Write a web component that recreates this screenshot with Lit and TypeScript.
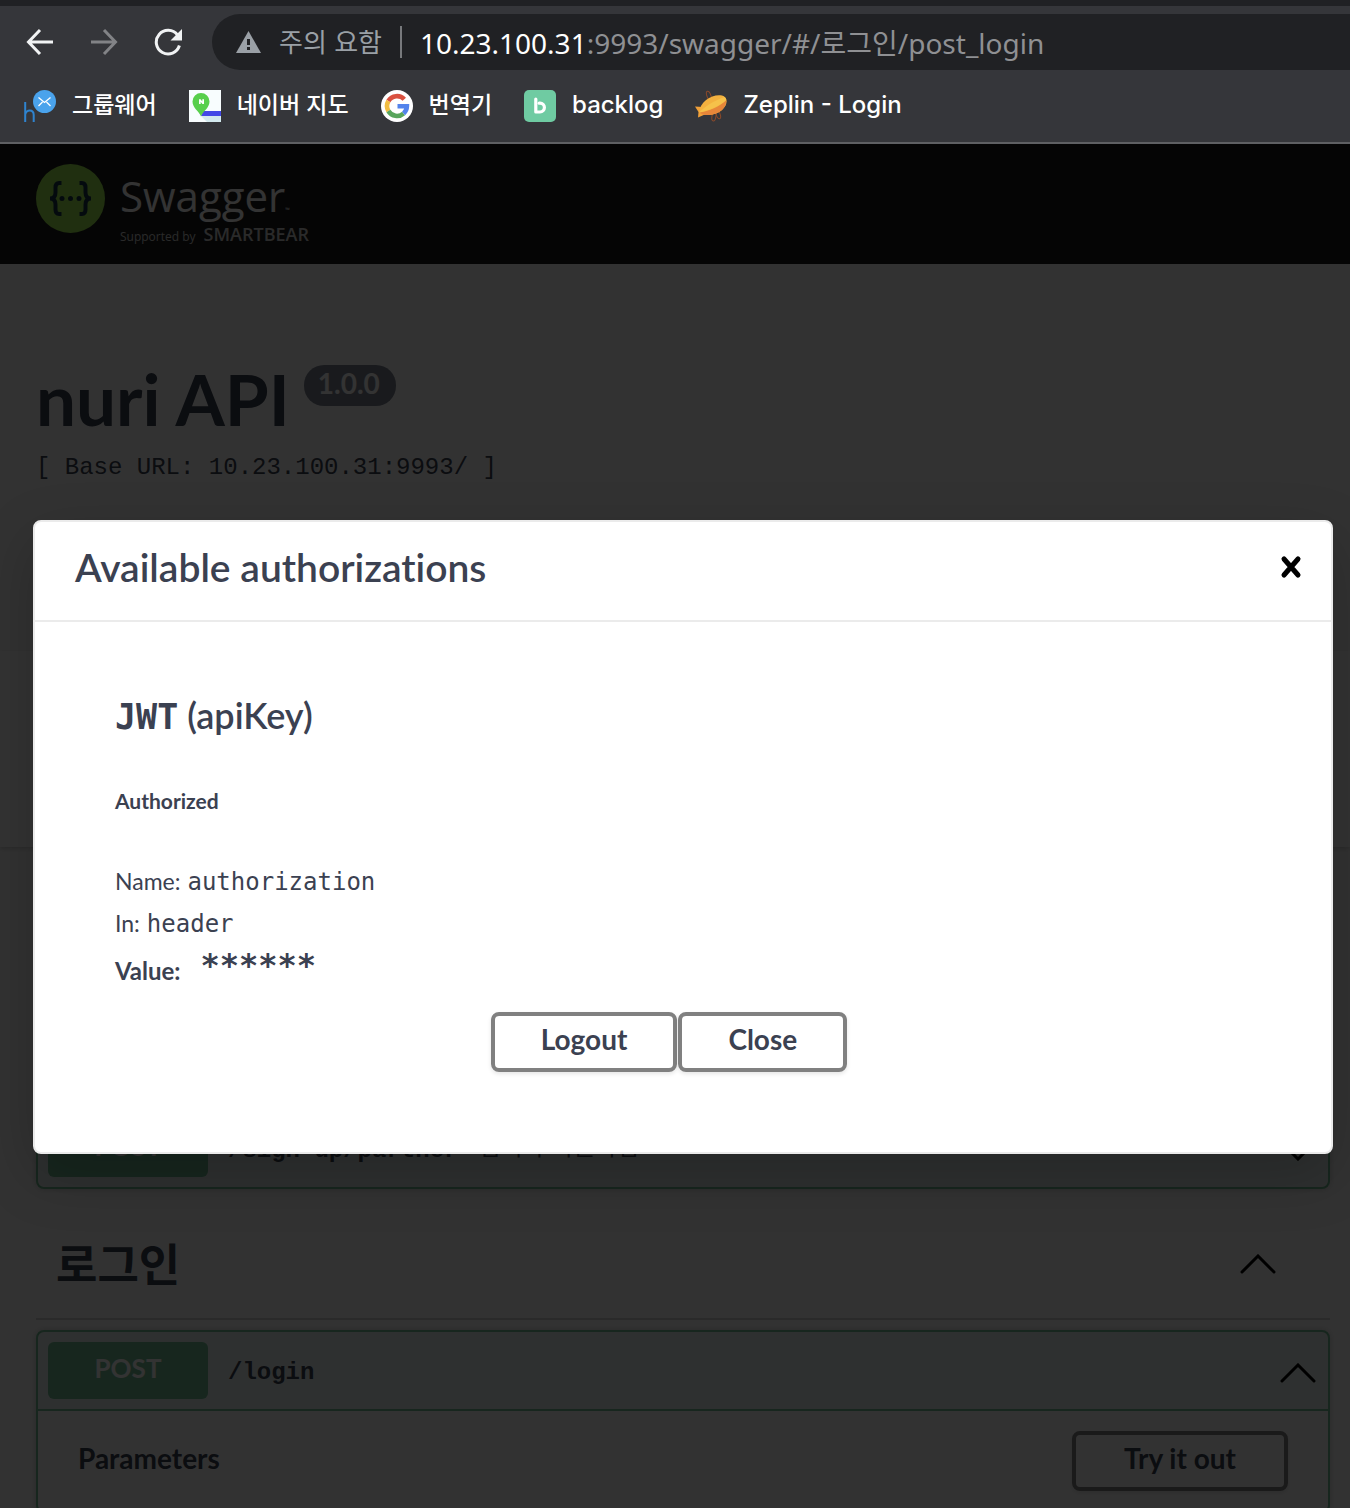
import { LitElement, html, css, svg, nothing, type TemplateResult } from "lit";
import { customElement, property } from "lit/decorators.js";

const chevron = (up: boolean) => html`
  <svg class="chevron" viewBox="0 0 36 20" aria-hidden="true">
    <path d=${up ? "M2 18 18 2 34 18" : "M2 2 18 18 34 2"} />
  </svg>`;

/* ---------- Browser toolbar and bookmarks ---------- */

const groupwareIcon = svg`
  <circle cx="20.500" cy="11.500" r="11.500" fill="#4aa3ec"/>
  <path d="M14.500 7.500 20.500 12.500 26.500 7.500M14.500 16 18.500 12M26.500 16 22.500 12" fill="none" stroke="#fff" stroke-width="1.300"/>
  <path d="M1.200 12v20M1.200 24.500c.8-3 2.800-4 4.600-4 2.600 0 3.900 1.600 3.900 4.500v7" fill="none" stroke="#2f84cf" stroke-width="2"/>`;

const mapIcon = svg`
  <path d="M0 0h32v32H0z" fill="#f8fdfe"/>
  <path d="M12 26h20v6H18z" fill="#d3e9ee"/>
  <path d="M14 21h18v5H12z" fill="#4348e6"/>
  <path d="M12 26.500C10 21 3.500 18 3.500 11.500a8.500 8.500 0 0 1 17 0C20.500 18 14 21 12 26.500z" fill="#58cf4c"/>
  <path d="M10 14V9.200h1.600l1.700 2.300V9.200h1.700V14h-1.600l-1.700-2.300V14z" fill="#fff"/>`;

const googleIcon = svg`
  <circle cx="16" cy="16" r="16" fill="#fff"/>
  <g fill="none" stroke-width="4.600">
    <path d="M23.300 9.300A10 10 0 0 0 7.400 11" stroke="#d9503f"/>
    <path d="M7.400 11a10 10 0 0 0 0 10" stroke="#f2bd42"/>
    <path d="M7.400 21a10 10 0 0 0 15.200 2.500" stroke="#58a55c"/>
    <path d="M22.600 23.500A10 10 0 0 0 25.900 16.300H16.500" stroke="#5383ec"/>
  </g>`;

const backlogIcon = svg`
  <rect width="32" height="32" rx="5" fill="#6fcba2"/>
  <path d="M11.800 9v13h4.200a4.400 4.400 0 0 0 0-8.800h-.8" fill="none" stroke="#fff" stroke-width="3.200" stroke-linejoin="round" stroke-linecap="round"/>`;

const zeplinIcon = svg`
  <g fill="none" stroke="#8c4a2a" stroke-width="1">
    <ellipse cx="14" cy="6" rx="2" ry="5" transform="rotate(-20 14 6)"/>
    <ellipse cx="23" cy="24" rx="2" ry="5" transform="rotate(-20 23 24)"/>
    <ellipse cx="19" cy="26" rx="2" ry="5" transform="rotate(10 19 26)"/>
  </g>
  <path d="M0 16.500 8 17 11 24 3 27.500 3.500 22z" fill="#f0a03a"/>
  <path d="M4 22.500C5 11 18 3.500 27 5.500c6 1.500 6 9 0 14.500C20 26 9 26.500 4 22.500z" fill="#f3b13f"/>
  <path d="M4 22.500C14 21.500 25 16.500 31.300 10c.2 3.500-1.300 7-4.300 10C20 26 9 26.500 4 22.500z" fill="#e7863a"/>
  <path d="M4 22.500C9 17 20 10 29.800 7c.8.800 1.300 1.800 1.500 3C25 16 13 21 4 22.500z" fill="#f6c14a"/>`;

const bookmarks: { label: string; icon: TemplateResult<2>; ko?: boolean }[] = [
  { label: "그룹웨어", icon: groupwareIcon, ko: true },
  { label: "네이버 지도", icon: mapIcon, ko: true },
  { label: "번역기", icon: googleIcon, ko: true },
  { label: "backlog", icon: backlogIcon },
  { label: "Zeplin - Login", icon: zeplinIcon },
];

@customElement("browser-bar")
export class BrowserBar extends LitElement {
  static styles = css`
    :host {
      display: block;
      background: #35363a;
      border-top: 6px solid #202124;
      border-bottom: 2px solid #5f6063;
      font-family: Inter, "Noto Sans CJK KR", sans-serif;
      color: #fff;
    }
    .nav { display: flex; align-items: center; padding: 8px 0 0 26px; }
    .tool { display: block; width: 28px; height: 28px; margin-right: 36px; padding: 0; border: 0; background: none; color: #f1f3f4; }
    .tool.off { color: #828386; }
    .tool.reload { margin-right: 30px; }
    .tool svg { display: block; width: 28px; height: 28px; fill: none; stroke: currentColor; stroke-width: 3; }
    .omnibox {
      display: flex;
      align-items: center;
      flex: 1;
      height: 56px;
      padding-left: 24px;
      border-radius: 28px 0 0 28px;
      background: #202124;
      color: #9aa0a6;
      white-space: nowrap;
      overflow: hidden;
    }
    .warn { width: 25px; height: 24px; flex: none; }
    .status { margin-left: 18px; padding-bottom: 4px; font-size: 26px; }
    .rule { width: 2px; height: 32px; margin: 0 18px 0 18px; background: #77797c; }
    .url { font-family: "Noto Sans", "Noto Sans CJK KR", sans-serif; font-size: 28px; color: #8f9093; outline: none; }
    .host { color: #fff; }
    .marks { display: flex; align-items: center; gap: 32px; height: 72px; padding-left: 24px; }
    .mark { display: flex; align-items: center; gap: 16px; color: #fff; text-decoration: none; font-size: 24px; font-weight: 500; line-height: 30px; white-space: nowrap; }
    .mark.ko { font-size: 23px; }
    .label { padding-bottom: 2px; }
    .mark svg { display: block; width: 32px; height: 32px; flex: none; }
  `;
  render() {
    return html`
      <nav class="nav" aria-label="Browser">
        <button class="tool" aria-label="Back"><svg viewBox="0 0 28 28"><path d="M27 14H2.500M14 2 2.500 14 14 26"/></svg></button>
        <button class="tool off" aria-label="Forward" disabled><svg viewBox="0 0 28 28"><path d="M1 14h24.500M14 2l11.500 12L14 26"/></svg></button>
        <button class="tool reload" aria-label="Reload">
          <svg viewBox="0 0 28 28"><path d="M23.500 7A11.800 11.800 0 1 0 25.400 17.500"/><path d="M28 1v11.500H16.500z" fill="currentColor" stroke="none"/></svg>
        </button>
        <div class="omnibox">
          <svg class="warn" viewBox="0 0 25 24" aria-hidden="true"><path d="M12.500 1 25 23H0z" fill="#9aa0a6"/><path d="M11 9h3v6h-3zM11 17h3v3h-3z" fill="#202124"/></svg>
          <span class="status">주의 요함</span>
          <span class="rule"></span>
          <div class="url" role="textbox" aria-label="Address" contenteditable="true" spellcheck="false"><span class="host">10.23.100.31</span>:9993/swagger/#/로그인/post_login</div>
        </div>
      </nav>
      <div class="marks">
        ${bookmarks.map((b) => html`
          <a class="mark ${b.ko ? "ko" : ""}" href="#"><svg viewBox="0 0 32 32" aria-hidden="true">${b.icon}</svg><span class="label">${b.label}</span></a>`)}
      </div>`;
  }
}

/* ---------- One API operation ---------- */

@customElement("op-block")
export class OpBlock extends LitElement {
  @property() path = "";
  @property() summary = "";
  @property({ type: Boolean }) open = false;

  static styles = css`
    :host {
      display: block;
      border: 2px solid #73be96;
      border-radius: 8px;
      background: #fafafa;
      box-shadow: 0 0 6px rgba(0, 0, 0, 0.19);
      font-family: Lato, "Noto Sans CJK KR", sans-serif;
      color: #3b4151;
    }
    .head { display: flex; align-items: center; padding: 10px 12px 10px 10px; background: rgba(73, 170, 130, 0.1); }
    .head.open { border-bottom: 2px solid #73be96; }
    .method {
      flex: none;
      width: 160px;
      height: 57px;
      box-sizing: border-box;
      padding-bottom: 4px;
      border-radius: 6px;
      background: #73be96;
      color: #fff;
      font-size: 26px;
      font-weight: 700;
      line-height: 53px;
      text-align: center;
    }
    .path { margin-left: 20px; padding-top: 4px; font: 700 24px "Liberation Mono", monospace; }
    .summary { flex: 1; margin-left: 20px; padding-bottom: 6px; font-size: 24px; line-height: 28px; }
    .toggle { display: block; padding: 4px 0 0; border: 0; background: none; }
    .chevron { display: block; width: 36px; height: 20px; fill: none; stroke: #000; stroke-width: 3; stroke-linecap: round; }
    .section { display: flex; align-items: center; justify-content: space-between; padding: 20px 40px; }
    .section h4 { margin: 0; padding-bottom: 6px; font-size: 28px; line-height: 48px; }
    .try {
      height: 60px;
      padding: 0 48px 6px;
      border: 4px solid #808080;
      border-radius: 8px;
      background: transparent;
      box-shadow: 0 2px 4px rgba(0, 0, 0, 0.1);
      font: 700 28px Lato, sans-serif;
      color: #3b4151;
    }
  `;
  render() {
    return html`
      <div class="head ${this.open ? "open" : ""}">
        <span class="method">POST</span>
        <span class="path">${this.path}</span>
        <span class="summary">${this.summary}</span>
        <button class="toggle" aria-label="Toggle ${this.path}" aria-expanded=${this.open}>${chevron(this.open)}</button>
      </div>
      ${this.open
        ? html`<div class="section"><h4>Parameters</h4><button class="try">Try it out</button></div>`
        : nothing}`;
  }
}

/* ---------- Authorization dialog ---------- */

@customElement("auth-dialog")
export class AuthDialog extends LitElement {
  static styles = css`
    :host {
      display: block;
      width: 100%;
      max-width: 1300px;
      box-sizing: border-box;
      border: 2px solid #ebebeb;
      border-radius: 8px;
      background: #fff;
      box-shadow: 0 20px 60px rgba(0, 0, 0, 0.2);
      font-family: Lato, sans-serif;
      font-variant-ligatures: none;
      color: #3b4151;
    }
    .head { display: flex; align-items: center; justify-content: space-between; padding: 0 28px 8px 40px; border-bottom: 2px solid #ebebeb; }
    h3 { margin: 0; font-size: 39px; font-weight: 600; line-height: 90px; }
    .x { display: block; padding: 0; border: 0; background: none; }
    .x svg { display: block; width: 24px; height: 24px; stroke: #000; stroke-width: 5; stroke-linecap: round; }
    .body { padding: 69px 80px 80px; }
    h4 { height: 48px; margin: 0 0 47px; font-size: 36px; font-weight: 600; line-height: 48px; }
    code { font-family: "DejaVu Sans Mono", monospace; }
    h4 code { font-size: 35px; }
    h6 { margin: 0 0 44px; font-size: 21px; line-height: 30px; }
    dl { margin: 0 0 20px; font-size: 23px; line-height: 42px; }
    .row { display: flex; align-items: baseline; gap: 7px; height: 42px; }
    .row code { font-size: 24px; }
    .row.value { gap: 20px; margin-top: 6px; font-size: 24px; font-weight: 700; }
    .value dd { align-self: flex-start; }
    .row.value code { display: block; font-size: 32px; line-height: 30px; }
    dt, dd { margin: 0; }
    .actions { display: flex; justify-content: center; gap: 1px; padding-right: 28px; }
    .btn {
      height: 60px;
      padding: 0 46px 6px;
      border: 4px solid #808080;
      border-radius: 8px;
      background: transparent;
      box-shadow: 0 2px 4px rgba(0, 0, 0, 0.1);
      font: 700 28px Lato, sans-serif;
      color: #3b4151;
    }
  `;
  render() {
    return html`
      <div class="head">
        <h3>Available authorizations</h3>
        <button class="x" aria-label="Close dialog"><svg viewBox="0 0 24 24"><path d="M5 4 19 20M19 4 5 20"/></svg></button>
      </div>
      <div class="body">
        <h4><code>JWT</code> (apiKey)</h4>
        <h6>Authorized</h6>
        <dl>
          <div class="row"><dt>Name:</dt><dd><code>authorization</code></dd></div>
          <div class="row"><dt>In:</dt><dd><code>header</code></dd></div>
          <div class="row value"><dt>Value:</dt><dd><code>******</code></dd></div>
        </dl>
        <div class="actions"><button class="btn">Logout</button><button class="btn">Close</button></div>
      </div>`;
  }
}

/* ---------- Page ---------- */

@customElement("app-root")
export class AppRoot extends LitElement {
  static styles = css`
    :host { display: flex; flex-direction: column; height: 100vh; overflow: hidden; font-family: Lato, "Noto Sans CJK KR", sans-serif; color: #3b4151; }
    browser-bar { flex: none; }
    .view { position: relative; flex: 1; min-height: 0; overflow: hidden; background: #fafafa; }
    .topbar { display: flex; align-items: center; gap: 15px; height: 120px; padding-left: 36px; background: #1b1b1b; color: #fff; font-family: "Open Sans", sans-serif; }
    .mark { width: 69px; height: 69px; flex: none; margin-bottom: 11px; }
    .name { padding-top: 20px; font-size: 42px; font-weight: 400; line-height: 28px; }
    .name small { font-size: 6px; }
    .by { display: flex; align-items: baseline; gap: 8px; font-size: 12px; line-height: 20px; color: #d0d0d0; }
    .by b { font-size: 18px; font-weight: 600; }
    .info { height: 286px; padding: 101px 20px 0 36px; }
    .title { display: flex; align-items: flex-start; gap: 14px; height: 76px; }
    h1 { margin: 0; font-size: 71px; font-weight: 700; line-height: 68px; }
    .version { height: 41px; box-sizing: border-box; padding: 0 16px 4px 14px; border-radius: 20px; background: #7d8492; color: #fff; font-size: 28px; font-weight: 700; line-height: 37px; }
    .base { margin: 13px 0 0; font: 24px/28px "Liberation Mono", monospace; white-space: pre; }
    .scheme { height: 196px; background: #fff; box-shadow: 0 2px 4px rgba(0, 0, 0, 0.15); }
    .ops { padding: 261px 20px 0 36px; }
    .tag { display: flex; align-items: center; justify-content: space-between; height: 129px; margin-bottom: 10px; padding: 0 54px 0 20px; border-bottom: 2px solid #cfcfd0; }
    .tag h2 { margin: 0; padding-top: 22px; font-size: 45px; font-weight: 700; line-height: 64px; }
    .toggle { display: block; padding: 0; border: 0; background: none; }
    .chevron { display: block; width: 36px; height: 20px; margin-top: 20px; fill: none; stroke: #000; stroke-width: 3; stroke-linecap: round; }
    .overlay { position: absolute; inset: 0; display: flex; align-items: center; justify-content: center; padding: 22px 17px 0 33px; background: rgba(0, 0, 0, 0.8); }
  `;
  render() {
    return html`
      <browser-bar></browser-bar>
      <main class="view">
        <header class="topbar">
          <svg class="mark" viewBox="0 0 69 69" aria-hidden="true">
            <circle cx="34.500" cy="34.500" r="34.500" fill="#a0eb50"/>
            <g fill="none" stroke="#173647" stroke-width="4">
              <path d="M25.500 19h-2.500c-3 0-3.500 2-3.500 4.500v5c0 3.500-1.500 6-5.500 6 4 0 5.500 2.500 5.500 6v5c0 2.500.5 4.500 3.500 4.500h2.500"/>
              <path d="M43.500 19h2.500c3 0 3.500 2 3.500 4.500v5c0 3.500 1.500 6 5.500 6-4 0-5.500 2.500-5.500 6v5c0 2.500-.5 4.500-3.500 4.500h-2.500"/>
            </g>
            <g fill="#173647"><circle cx="26" cy="34.500" r="2.500"/><circle cx="34.500" cy="34.500" r="2.500"/><circle cx="43" cy="34.500" r="2.500"/></g>
          </svg>
          <div class="brand">
            <div class="name">Swagger<small>™</small></div>
            <div class="by">Supported by <b>SMARTBEAR</b></div>
          </div>
        </header>
        <section class="info">
          <div class="title"><h1>nuri API</h1><span class="version">1.0.0</span></div>
          <p class="base">[ Base URL: 10.23.100.31:9993/ ]</p>
        </section>
        <div class="scheme"></div>
        <section class="ops">
          <op-block path="/sign-up/partner" summary="협력사 회원가입"></op-block>
          <div class="tag">
            <h2>로그인</h2>
            <button class="toggle" aria-label="Toggle section" aria-expanded="true">${chevron(true)}</button>
          </div>
          <op-block path="/login" open></op-block>
        </section>
        <div class="overlay"><auth-dialog role="dialog" aria-modal="true" aria-label="Available authorizations"></auth-dialog></div>
      </main>`;
  }
}
